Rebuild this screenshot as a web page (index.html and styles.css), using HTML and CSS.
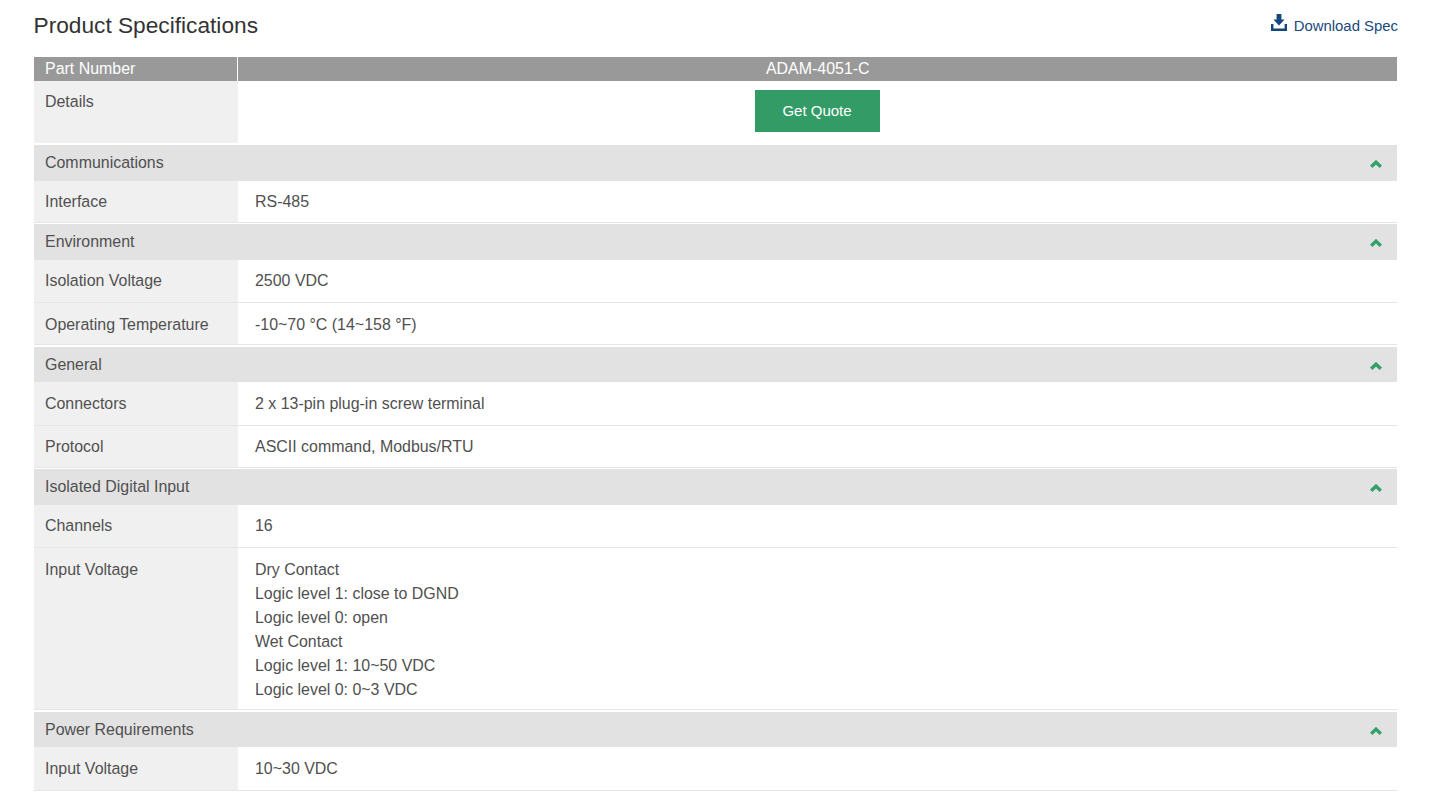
FILE: index.html
```html
<!DOCTYPE html>
<html lang="en">
<head>
<meta charset="utf-8">
<title>Product Specifications</title>
<link rel="stylesheet" href="styles.css">
</head>
<body>
<main class="page">
  <header class="top">
    <h2 class="title">Product Specifications</h2>
    <a class="download" href="#">
      <svg class="dl-icon" viewBox="0 0 16 17" width="16" height="17" aria-hidden="true"><path d="M5.600 0h4.800v5.600h3.200L8 11.400 2.400 5.600h3.200z"/><path d="M0 10h2.400v4.600h11.200V10H16v7H0z"/></svg>
      <span>Download Spec</span>
    </a>
  </header>
  <div class="spec">
    <div class="row head"><div class="key">Part Number</div><div class="val">ADAM-4051-C</div></div>
    <div class="row details"><div class="key">Details</div><div class="val"><a class="quote" href="#">Get Quote</a></div></div>

    <div class="section"><span class="section-name">Communications</span><svg class="chev" viewBox="0 0 12 8" width="12" height="8" aria-hidden="true"><path d="M1.200 6.700 6 2.200l4.800 4.500"/></svg></div>
    <div class="row"><div class="key">Interface</div><div class="val">RS-485</div></div>

    <div class="section"><span class="section-name">Environment</span><svg class="chev" viewBox="0 0 12 8" width="12" height="8" aria-hidden="true"><path d="M1.200 6.700 6 2.200l4.800 4.500"/></svg></div>
    <div class="row"><div class="key">Isolation Voltage</div><div class="val">2500 VDC</div></div>
    <div class="row"><div class="key">Operating Temperature</div><div class="val">-10~70 °C (14~158 °F)</div></div>

    <div class="section"><span class="section-name">General</span><svg class="chev" viewBox="0 0 12 8" width="12" height="8" aria-hidden="true"><path d="M1.200 6.700 6 2.200l4.800 4.500"/></svg></div>
    <div class="row"><div class="key">Connectors</div><div class="val">2 x 13-pin plug-in screw terminal</div></div>
    <div class="row"><div class="key">Protocol</div><div class="val">ASCII command, Modbus/RTU</div></div>

    <div class="section"><span class="section-name">Isolated Digital Input</span><svg class="chev" viewBox="0 0 12 8" width="12" height="8" aria-hidden="true"><path d="M1.200 6.700 6 2.200l4.800 4.500"/></svg></div>
    <div class="row"><div class="key">Channels</div><div class="val">16</div></div>
    <div class="row"><div class="key">Input Voltage</div><div class="val">Dry Contact<br>Logic level 1: close to DGND<br>Logic level 0: open<br>Wet Contact<br>Logic level 1: 10~50 VDC<br>Logic level 0: 0~3 VDC</div></div>

    <div class="section"><span class="section-name">Power Requirements</span><svg class="chev" viewBox="0 0 12 8" width="12" height="8" aria-hidden="true"><path d="M1.200 6.700 6 2.200l4.800 4.500"/></svg></div>
    <div class="row"><div class="key">Input Voltage</div><div class="val">10~30 VDC</div></div>
  </div>
</main>
</body>
</html>
```
FILE: styles.css
```css
html, body {
  margin: 0;
  padding: 0;
  background: #fff;
  overflow: hidden;
}
body {
  font-family: "Liberation Sans", Arial, sans-serif;
  font-size: 15.950px;
  line-height: 24px;
  color: #505050;
}
.page {
  padding: 0 48px 0 33.500px;
}
.top {
  display: flex;
  justify-content: space-between;
  align-items: flex-start;
  height: 57px;
}
.title {
  margin: 11px 0 0;
  font-size: 22.700px;
  line-height: 28px;
  font-weight: 400;
  color: #333;
}
.download {
  display: flex;
  align-items: flex-start;
  gap: 7px;
  margin: 13.500px -1px 0 0;
  font-size: 14.900px;
  color: #1c4a7c;
  text-decoration: none;
}
.dl-icon {
  fill: #15467c;
  margin-top: 0.500px;
}
.row {
  display: flex;
  align-items: stretch;
  border-bottom: 1px solid #e6e6e6;
}
.row:has(+ .section) {
  margin-bottom: 1.500px;
}
.row:has(+ .section) .key,
.row:has(+ .section) .val {
  padding-bottom: 7.500px;
}
.key {
  flex: 0 0 204.500px;
  box-sizing: border-box;
  padding: 9.500px 11px 9px 11.500px;
  background: #f0f0f0;
}
.val {
  flex: 1;
  padding: 9.500px 16px 9px 17px;
}
.row.head,
.row.details {
  border-bottom: 0;
  margin-bottom: 0;
}
.head .key,
.head .val {
  background: #999;
  color: #fff;
  padding: 0 11px 0 11.500px;
  height: 24px;
}
.head .key {
  border-right: 1px solid #fff;
}
.head .val {
  text-align: center;
}
.row.details .key,
.row.details .val {
  height: 62px;
  box-sizing: border-box;
  padding-top: 9px;
  padding-bottom: 0;
}
.row.details {
  margin-bottom: 2px;
}
.row.details .val {
  padding-right: 18px;
  text-align: center;
}
.quote {
  display: block;
  box-sizing: border-box;
  width: 125px;
  height: 42px;
  margin: 0 auto;
  font-size: 15px;
  line-height: 41px;
  background: #339b66;
  color: #fff;
  text-decoration: none;
}
.section {
  display: flex;
  justify-content: space-between;
  align-items: center;
  height: 35.500px;
  padding: 0 15px 0 11.500px;
  background: #e2e2e2;
}
.section-name {
  padding-top: 0.500px;
}
.chev {
  fill: none;
  stroke: #339f69;
  stroke-width: 3.400;
  margin-top: 3px;
}
```
